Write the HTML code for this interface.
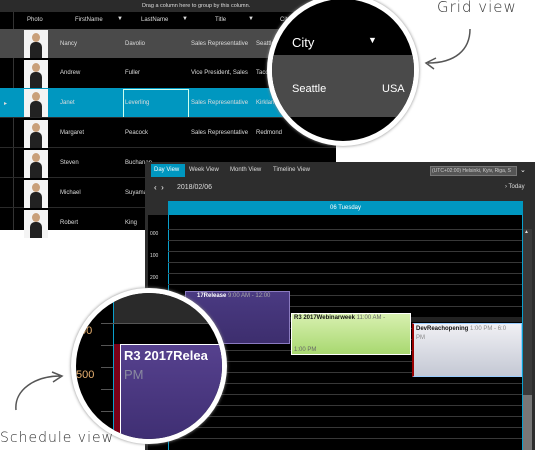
<!DOCTYPE html>
<html><head><meta charset="utf-8"><style>
*{margin:0;padding:0;box-sizing:border-box}
body{width:535px;height:450px;background:#fff;position:relative;overflow:hidden;font-family:"Liberation Sans",sans-serif}
.a{position:absolute}
.t{position:absolute;font-size:6px;color:#ddd;white-space:nowrap}
.ph{position:absolute;left:24px;width:24px;height:28px;background:#f4f4f4}
.ph::after{content:"";position:absolute;left:6px;top:12px;width:12px;height:16px;background:#222;border-radius:5px 5px 0 0}
.ph::before{content:"";position:absolute;left:8px;top:3px;width:8px;height:9px;background:#c9a07a;border-radius:50%}
.hl{position:absolute;left:168px;width:354px;height:1px;background:#383838}
</style></head><body>
<!-- GRID -->
<div class="a" style="left:0;top:0;width:336px;height:230px;background:#000"></div>
<div class="a" style="left:0;top:0;width:336px;height:12px;background:#2b2b2b"></div>
<div class="t" style="left:142px;top:3px;font-size:5.5px">Drag a column here to group by this column.</div>
<div class="a" style="left:13px;top:12px;width:1px;height:218px;background:#333"></div>
<div class="t" style="left:27px;top:17px">Photo</div>
<div class="t" style="left:75px;top:17px">FirstName</div><div class="t" style="left:117px;top:16px">▼</div>
<div class="t" style="left:141px;top:17px">LastName</div><div class="t" style="left:182px;top:16px">▼</div>
<div class="t" style="left:215px;top:17px">Title</div><div class="t" style="left:248px;top:16px">▼</div>
<div class="t" style="left:280px;top:17px">City</div>
<div class="a" style="left:0;top:29px;width:336px;height:29px;background:#4a4a4a"></div>
<div class="a" style="left:0;top:88px;width:336px;height:30px;background:#0097c0"></div>
<div class="a" style="left:123px;top:89px;width:66px;height:29px;border:1px solid #cfe;"></div>
<div class="t" style="left:4px;top:100px">▸</div>
<div class="a" style="left:0;top:147px;width:336px;height:1px;background:#2a2a2a"></div>
<div class="a" style="left:0;top:177px;width:336px;height:1px;background:#2a2a2a"></div>
<div class="a" style="left:0;top:207px;width:336px;height:1px;background:#2a2a2a"></div>
<div class="a" style="left:0;top:117px;width:336px;height:1px;background:#2a2a2a"></div>
<div class="ph" style="top:30px"></div><div class="ph" style="top:60px"></div><div class="ph" style="top:89px"></div><div class="ph" style="top:120px"></div><div class="ph" style="top:150px"></div><div class="ph" style="top:180px"></div><div class="ph" style="top:210px"></div>
<div class="t" style="left:60px;top:41px">Nancy</div><div class="t" style="left:125px;top:41px">Davolio</div><div class="t" style="left:191px;top:41px">Sales Representative</div><div class="t" style="left:256px;top:41px">Seattle</div>
<div class="t" style="left:60px;top:70px">Andrew</div><div class="t" style="left:125px;top:70px">Fuller</div><div class="t" style="left:191px;top:70px">Vice President, Sales</div><div class="t" style="left:256px;top:70px">Tacoma</div>
<div class="t" style="left:60px;top:100px">Janet</div><div class="t" style="left:125px;top:100px">Leverling</div><div class="t" style="left:191px;top:100px">Sales Representative</div><div class="t" style="left:256px;top:100px">Kirkland</div>
<div class="t" style="left:60px;top:130px">Margaret</div><div class="t" style="left:125px;top:130px">Peacock</div><div class="t" style="left:191px;top:130px">Sales Representative</div><div class="t" style="left:256px;top:130px">Redmond</div>
<div class="t" style="left:60px;top:160px">Steven</div><div class="t" style="left:125px;top:160px">Buchanan</div>
<div class="t" style="left:60px;top:190px">Michael</div><div class="t" style="left:125px;top:190px">Suyama</div>
<div class="t" style="left:60px;top:220px">Robert</div><div class="t" style="left:125px;top:220px">King</div>

<!-- Grid magnifier -->
<div class="a" style="left:267px;top:-6px;width:152px;height:152px;border-radius:50%;border:5px solid #fff;overflow:hidden;background:#000;box-shadow:0 0 3px #888">
 <div class="a" style="left:0;top:56px;width:150px;height:62px;background:#4a4a4a"></div>
 <div class="t" style="left:20px;top:36px;font-size:13px;color:#fff">City</div>
 <div class="t" style="left:96px;top:36px;font-size:9px;color:#fff">▼</div>
 <div class="t" style="left:20px;top:84px;font-size:11px;color:#fff">Seattle</div>
 <div class="t" style="left:110px;top:84px;font-size:11px;color:#fff">USA</div>
</div>
<div class="t" style="left:437px;top:-2px;font-size:15px;color:#333;font-family:'DejaVu Sans',sans-serif;font-weight:200;letter-spacing:1px">Grid view</div>
<svg class="a" style="left:420px;top:25px" width="60" height="50"><path d="M50 4 C50 25 35 38 8 38 M16 33 L6 38 L14 44" stroke="#555" stroke-width="1.5" fill="none"/></svg>

<!-- SCHEDULER -->
<div class="a" style="left:145px;top:162px;width:390px;height:288px;background:#2d2d2d"></div>
<div class="a" style="left:151px;top:164px;width:34px;height:13px;background:#0097c0"></div>
<div class="t" style="left:154px;top:167px;color:#fff">Day View</div>
<div class="t" style="left:189px;top:167px">Week View</div>
<div class="t" style="left:230px;top:167px">Month View</div>
<div class="t" style="left:273px;top:167px">Timeline View</div>
<div class="a" style="left:430px;top:166px;width:87px;height:10px;background:#555;border:1px solid #777"></div>
<div class="t" style="left:432px;top:168px;font-size:5px;color:#ccc">(UTC+02:00) Helsinki, Kyiv, Riga, S</div>
<div class="t" style="left:520px;top:166px;font-size:7px;color:#fff">⌄</div>
<div class="t" style="left:154px;top:183px;font-size:8px;color:#fff">‹ &nbsp;›</div>
<div class="t" style="left:177px;top:184px;font-size:7px">2018/02/06</div>
<div class="t" style="left:505px;top:184px;font-size:6px">› Today</div>
<div class="a" style="left:168px;top:201px;width:355px;height:14px;background:#0097c0"></div>
<div class="t" style="left:330px;top:205px;color:#fff">06 Tuesday</div>
<div class="a" style="left:148px;top:215px;width:375px;height:235px;background:#000"></div>
<div class="a" style="left:168px;top:215px;width:1px;height:235px;background:#0aa0cc"></div>
<div class="a" style="left:522px;top:215px;width:1px;height:235px;background:#0aa0cc"></div>
<div class="hl" style="top:229px"></div><div class="hl" style="top:240px"></div><div class="hl" style="top:251px"></div><div class="hl" style="top:262px"></div><div class="hl" style="top:273px"></div><div class="hl" style="top:284px"></div><div class="hl" style="top:295px"></div><div class="hl" style="top:306px"></div><div class="hl" style="top:317px;height:5px;background:#222"></div><div class="hl" style="top:328px"></div><div class="hl" style="top:339px"></div><div class="hl" style="top:350px"></div><div class="hl" style="top:361px"></div><div class="hl" style="top:372px"></div><div class="hl" style="top:383px"></div><div class="hl" style="top:394px"></div><div class="hl" style="top:405px"></div><div class="hl" style="top:416px"></div><div class="hl" style="top:427px"></div><div class="hl" style="top:438px"></div>
<div class="t" style="left:150px;top:231px;font-size:5px">000</div>
<div class="t" style="left:150px;top:253px;font-size:5px">100</div>
<div class="t" style="left:150px;top:275px;font-size:5px">200</div>
<div class="t" style="left:150px;top:430px;font-size:5px">900</div>
<div class="a" style="left:523px;top:229px;width:9px;height:221px;background:#3a3a3a"></div>
<div class="a" style="left:523px;top:395px;width:9px;height:55px;background:#777"></div>
<div class="t" style="left:524px;top:229px;font-size:5px;color:#ddd">▲</div>
<div class="a" style="left:185px;top:291px;width:105px;height:53px;background:linear-gradient(#4a3a82,#3d2e6e);border:1px solid #8a7ac0"></div>
<div class="t" style="left:197px;top:293px;font-weight:bold;color:#fff">17Release <span style="font-weight:normal;color:#aaa">9:00 AM - 12:00</span></div>
<div class="a" style="left:291px;top:313px;width:120px;height:42px;background:linear-gradient(#d8f0b0,#a8d870);border:1px solid #fff"></div>
<div class="t" style="left:294px;top:315px;font-weight:bold;color:#111">R3 2017Webinarweek <span style="font-weight:normal;color:#666">11:00 AM -</span></div>
<div class="t" style="left:294px;top:347px;color:#666">1:00 PM</div>
<div class="a" style="left:412px;top:323px;width:110px;height:54px;background:linear-gradient(#f0f0f4,#c4c8d4);border:1px solid #9cf;border-left:2px solid #900"></div>
<div class="t" style="left:416px;top:326px;font-weight:bold;color:#111">DevReachopening <span style="font-weight:normal;color:#888">1:00 PM - 6:0</span></div>
<div class="t" style="left:416px;top:335px;color:#888">PM</div>

<!-- Schedule magnifier -->
<div class="a" style="left:71px;top:288px;width:156px;height:156px;border-radius:50%;border:5px solid #fff;overflow:hidden;background:#000;box-shadow:0 0 3px #888">
 <div class="a" style="left:37px;top:0;width:1px;height:150px;background:#0aa0cc"></div>
 <div class="a" style="left:38px;top:0;width:115px;height:30px;background:#2a2a2a"></div>
 <div class="a" style="left:25px;top:30px;width:130px;height:1px;background:#555"></div>
 <div class="a" style="left:25px;top:52px;width:12px;height:1px;background:#555"></div>
 <div class="a" style="left:25px;top:74px;width:12px;height:1px;background:#555"></div>
 <div class="a" style="left:25px;top:96px;width:12px;height:1px;background:#555"></div>
 <div class="a" style="left:25px;top:118px;width:12px;height:1px;background:#555"></div>
 <div class="t" style="left:4px;top:32px;font-size:11px;color:#e8b070">00</div>
 <div class="t" style="left:0px;top:76px;font-size:11px;color:#e8b070">500</div>
 <div class="a" style="left:38px;top:51px;width:6px;height:100px;background:#7a0018"></div>
 <div class="a" style="left:44px;top:51px;width:112px;height:100px;background:linear-gradient(#56418e,#3e2e72);border:1px solid #fff"></div>
 <div class="t" style="left:48px;top:55px;font-size:13px;font-weight:bold;color:#fff">R3 2017Relea</div>
 <div class="t" style="left:48px;top:74px;font-size:13px;color:#8a8aa0">PM</div>
</div>
<div class="t" style="left:0px;top:430px;font-size:14px;color:#333;font-family:'DejaVu Sans',sans-serif;font-weight:200;letter-spacing:1px">Schedule view</div>
<svg class="a" style="left:10px;top:370px" width="60" height="45"><path d="M6 40 C4 20 25 6 50 6 M42 2 L52 6 L43 12" stroke="#555" stroke-width="1.5" fill="none"/></svg>
</body></html>
